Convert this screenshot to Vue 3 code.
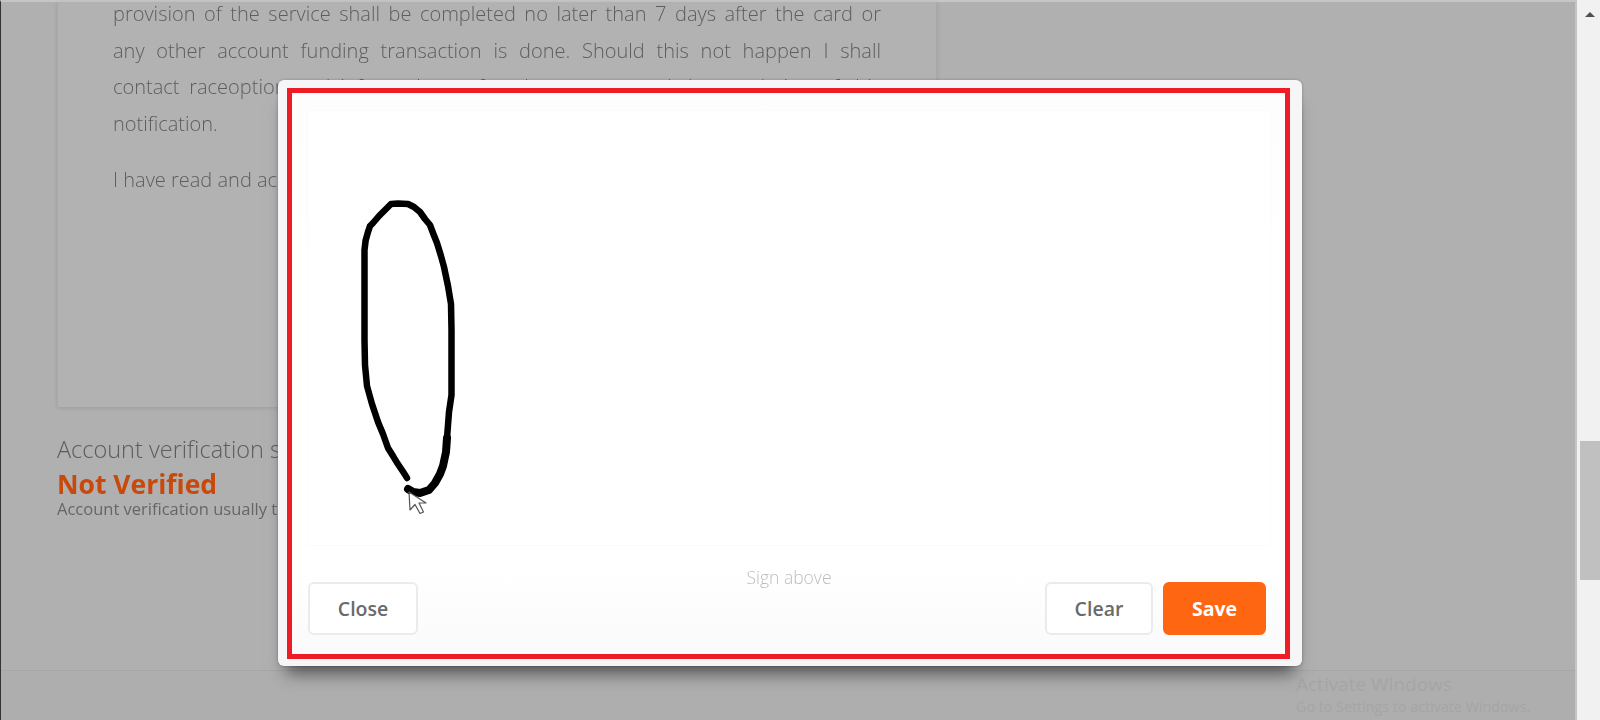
<template>
  <div class="page">
    <div class="main">
      <div class="card">
        <div class="para">
          <div v-for="line in termLines" :key="line" class="just">{{ line }}</div>
          <div>notification.</div>
        </div>
        <div class="para accept">I have read and accept the terms above.</div>
      </div>
      <div class="status">
        <div class="status-label">Account verification status:</div>
        <div class="status-value">Not Verified</div>
        <div class="status-note">Account verification usually takes up to 24 hours.</div>
      </div>
      <div class="page-footer"></div>
      <div class="activate">
        <div class="activate-title">Activate Windows</div>
        <div class="activate-sub">Go to Settings to activate Windows.</div>
      </div>
    </div>

    <div class="scrollbar">
      <div class="arrow"></div>
      <div class="thumb"></div>
    </div>

    <div class="modal">
      <div class="frame">
        <div class="canvas">
          <svg class="sig" viewBox="308 111 962 434" width="962" height="434">
            <path class="ink" :d="strokeMain" />
            <path class="ink heavy" :d="strokeBottom" />
            <path class="cursor" d="M409 492 L410 510 L415 504.500 L420 513.500 L423.500 512 L419 503 L426 503 Z" />
          </svg>
        </div>
        <div class="sign-row">
          <div class="btn-side">
            <button class="btn">Close</button>
          </div>
          <div class="caption">Sign above</div>
          <div class="btn-side right">
            <button class="btn clear">Clear</button>
            <button class="btn save">Save</button>
          </div>
        </div>
      </div>
    </div>
  </div>
</template>

<script setup>
const termLines = [
  'provision of the service shall be completed no later than 7 days after the card or',
  'any other account funding transaction is done. Should this not happen I shall',
  'contact raceoption and inform them of such an event and the resolution of this'
]

// traced from the drawn signature, gap at the bottom is part of it
const strokeMain =
  'M407 478 C403 471 398 465 393 456 L388 448 L383 434 L378 422 L372 404 L367 386 L365 365 L364.500 340 L364.500 250 Q365 240 368 232 L370 226 L373 223 L379 216 L385 210 L391 204 L398 203.500 L408 204 L414 207 L420 212 L425 219 L430 225 L433 233 L437 243 L441 256 L444 267 L448 286 L451 304 L451.500 330 L451.500 395 L449 412 L448 425 L447 438'
const strokeBottom = 'M447 438 L446 452 L443 466 L440 474 L435 483 L429 490 L420 493 L413 492 L408 489'
</script>

<style>
html, body {
  margin: 0;
  background: #b0b0b0;
}
</style>

<style scoped>
.page {
  display: flex;
  position: relative;
  width: 1600px;
  height: 720px;
  overflow: hidden;
  font-family: "Open Sans", "Liberation Sans", sans-serif;
}

.main {
  flex: 1;
  position: relative;
  display: flex;
  flex-direction: column;
  background: #b0b0b0;
  border-top: 2px solid #c6c6c6;
  border-left: 1px solid #333;
  box-sizing: border-box;
  border-right: 2px solid #c4c4c4;
}

.card {
  box-sizing: border-box;
  width: 880px;
  height: 405px;
  margin-left: 56px;
  padding: 0 55px 0 55px;
  background: #b2b2b3;
  box-shadow: 0 1px 4px rgba(0, 0, 0, 0.12);
  border-left: 1px solid #a9a9a9;
  border-right: 1px solid #a9a9a9;
  font-size: 20px;
  font-weight: 300;
  line-height: 36.500px;
  color: #5e5e5e;
  filter: blur(0.4px);
}

.para {
  margin-top: -6px;
}

.accept {
  margin-top: 20px;
}

.just {
  text-align: justify;
  text-align-last: justify;
}

.status {
  margin: 26px 0 0 56px;
  color: #5c5c5c;
  filter: blur(0.4px);
}

.status-label {
  font-size: 23.500px;
  font-weight: 300;
  line-height: 32px;
}

.status-value {
  font-size: 26.500px;
  font-weight: 700;
  line-height: 38px;
  color: #c9490c;
}

.status-note {
  font-size: 16.500px;
  line-height: 18px;
  margin-top: -3px;
  color: #666;
}

.page-footer {
  margin-top: auto;
  height: 49px;
  border-top: 1px solid #a6a6a6;
  background: #aeaeae;
}

.activate {
  position: absolute;
  left: 1295px;
  top: 670px;
  color: #a5a5a5;
}

.activate-title {
  font-size: 19px;
  line-height: 25px;
}

.activate-sub {
  font-size: 14.300px;
  line-height: 20px;
}

.scrollbar {
  position: relative;
  width: 23px;
  background: #f1f1f1;
}

.arrow {
  position: absolute;
  left: 8px;
  top: 12px;
  border-left: 5px solid transparent;
  border-right: 5px solid transparent;
  border-bottom: 5px solid #505050;
}

.thumb {
  position: absolute;
  left: 3px;
  right: 0;
  top: 441px;
  height: 139px;
  background: #c0c0c0;
}

.modal {
  position: absolute;
  left: 278px;
  top: 80px;
  box-sizing: border-box;
  width: 1024px;
  height: 586px;
  padding: 8px 12px 7px 9px;
  background: #f6f6f8;
  border-radius: 6px;
  box-shadow: 0 15px 16px -8px rgba(0, 0, 0, 0.55), 0 0 3px rgba(0, 0, 0, 0.25);
}

.frame {
  box-sizing: border-box;
  height: 100%;
  padding: 18px 15px 0 16px;
  border: 5px solid #ee1c25;
  background: linear-gradient(#fdfdfe, #ffffff 30%, #ffffff 85%, #fafafc);
}

.canvas {
  height: 434px;
  background: #fff;
  box-shadow: 0 0 0 1px #fbfbfb;
}

.sig {
  display: block;
  filter: blur(0.4px);
}

.ink {
  fill: none;
  stroke: #000;
  stroke-width: 6.500;
  stroke-linecap: round;
  stroke-linejoin: round;
}

.heavy {
  stroke-width: 8;
}

.cursor {
  fill: #fff;
  stroke: #555;
  stroke-width: 1.200;
  stroke-linejoin: round;
}

.sign-row {
  display: grid;
  grid-template-columns: 1fr auto 1fr;
  align-items: start;
}

.btn-side {
  display: flex;
  gap: 10px;
  margin-top: 37px;
}

.right {
  justify-content: flex-end;
  padding-right: 4px;
}

.caption {
  padding-top: 20px;
  font-size: 17.500px;
  font-weight: 300;
  line-height: 24px;
  color: #bdbdbd;
  filter: blur(0.4px);
}

.btn {
  box-sizing: border-box;
  width: 110px;
  height: 53px;
  padding: 0;
  border: 2px solid #ebebeb;
  border-radius: 6px;
  background: #fff;
  font-family: inherit;
  font-size: 19.500px;
  font-weight: 600;
  color: #6a6a6a;
}

.clear {
  width: 108px;
}

.save {
  width: 103px;
  border-color: #ff6611;
  background: #ff6611;
  color: #fff;
  font-weight: 700;
}
</style>
